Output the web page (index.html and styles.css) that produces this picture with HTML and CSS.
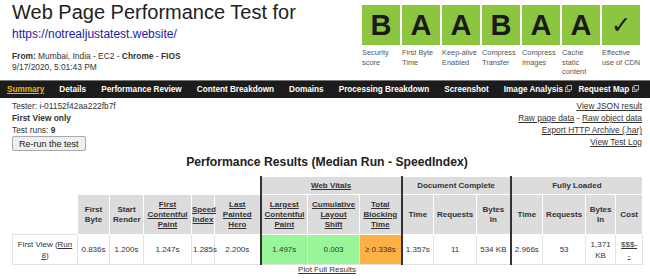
FILE: index.html
```html
<!DOCTYPE html>
<html lang="en">
<head>
    <meta charset="UTF-8">
    <title>WebPageTest - Test Result</title>
    <link rel="stylesheet" href="styles.css">
</head>
<body>

    <div class="header">
        <div class="info">
            <h1 class="title">Web Page Performance Test for</h1>
            <a class="url" href="#">https://notrealjustatest.website/</a>
            <div class="from"><b>From:</b> Mumbai, India - EC2 - <b>Chrome</b> - <b>FIOS</b></div>
            <div class="date">9/17/2020, 5:01:43 PM</div>
        </div>
        <div class="grades">
            <div class="grade">
                <div class="box">B</div>
                <div class="label">Security score</div>
            </div>
            <div class="grade">
                <div class="box">A</div>
                <div class="label">First Byte Time</div>
            </div>
            <div class="grade">
                <div class="box">A</div>
                <div class="label">Keep-alive Enabled</div>
            </div>
            <div class="grade">
                <div class="box">B</div>
                <div class="label">Compress Transfer</div>
            </div>
            <div class="grade">
                <div class="box">A</div>
                <div class="label">Compress Images</div>
            </div>
            <div class="grade">
                <div class="box">A</div>
                <div class="label">Cache static content</div>
            </div>
            <div class="grade">
                <div class="box check">&#10003;</div>
                <div class="label">Effective use of CDN</div>
            </div>
        </div>
    </div>

    <div class="nav">
        <a class="active" href="#">Summary</a>
        <a href="#">Details</a>
        <a href="#">Performance Review</a>
        <a href="#">Content Breakdown</a>
        <a href="#">Domains</a>
        <a href="#">Processing Breakdown</a>
        <a href="#">Screenshot</a>
        <a class="popup" href="#">Image Analysis <svg class="ext" viewBox="0 0 8 8"><rect x="0.5" y="2.5" width="5" height="5" fill="none" stroke="#bbb"/><rect x="2.5" y="0.5" width="5" height="5" fill="#1c1c1c" stroke="#bbb"/></svg></a>
        <a href="#">Request Map <svg class="ext" viewBox="0 0 8 8"><rect x="0.5" y="2.5" width="5" height="5" fill="none" stroke="#bbb"/><rect x="2.5" y="0.5" width="5" height="5" fill="#1c1c1c" stroke="#bbb"/></svg></a>
    </div>

    <div class="main">
        <div class="meta">
            <div class="tester">
                <div>Tester: i-01152f42aa222fb7f</div>
                <div><b>First View only</b></div>
                <div>Test runs: <b>9</b></div>
                <button class="rerun">Re-run the test</button>
            </div>
            <div class="links">
                <div><a href="#">View JSON result</a></div>
                <div><a href="#">Raw page data</a> - <a href="#">Raw object data</a></div>
                <div><a href="#">Export HTTP Archive (.har)</a></div>
                <div><a href="#">View Test Log</a></div>
            </div>
        </div>

        <h2 class="results-title">Performance Results (Median Run - SpeedIndex)</h2>

        <table class="results">
            <colgroup>
                <col style="width:65px">
                <col style="width:32px">
                <col style="width:34px">
                <col style="width:48px">
                <col style="width:23px">
                <col style="width:46px">
                <col style="width:47px">
                <col style="width:52px">
                <col style="width:42px">
                <col style="width:32px">
                <col style="width:43px">
                <col style="width:34px">
                <col style="width:32px">
                <col style="width:43px">
                <col style="width:30px">
                <col style="width:27px">
            </colgroup>
            <tr class="groups">
                <td class="blank" colspan="6"></td>
                <th class="sep" colspan="3"><a href="#">Web Vitals</a></th>
                <th class="sep" colspan="3">Document Complete</th>
                <th class="sep" colspan="4">Fully Loaded</th>
            </tr>
            <tr class="heads">
                <td class="blank"></td>
                <th>First Byte</th>
                <th>Start Render</th>
                <th><a href="#">First Contentful Paint</a></th>
                <th class="tight"><a href="#">Speed Index</a></th>
                <th><a href="#">Last Painted Hero</a></th>
                <th class="sep"><a href="#">Largest Contentful Paint</a></th>
                <th><a href="#">Cumulative Layout Shift</a></th>
                <th><a href="#">Total Blocking Time</a></th>
                <th class="sep">Time</th>
                <th>Requests</th>
                <th>Bytes In</th>
                <th class="sep">Time</th>
                <th>Requests</th>
                <th>Bytes In</th>
                <th>Cost</th>
            </tr>
            <tr class="data">
                <td>First View (<a href="#">Run</a><br><a href="#">8</a>)</td>
                <td>0.836s</td>
                <td>1.200s</td>
                <td>1.247s</td>
                <td>1.285s</td>
                <td>2.200s</td>
                <td class="sep good">1.497s</td>
                <td class="good">0.003</td>
                <td class="warn">&ge; 0.338s</td>
                <td class="sep">1.357s</td>
                <td>11</td>
                <td>534 KB</td>
                <td class="sep">2.966s</td>
                <td>53</td>
                <td>1,371 KB</td>
                <td><a href="#">$$$-<br>-</a></td>
            </tr>
        </table>

        <div class="plot"><a href="#">Plot Full Results</a></div>
    </div>

</body>
</html>
```

FILE: styles.css
```css
*{
    margin: 0px;
    padding: 0px;
    box-sizing: border-box;
}
body{
    font-family: "Liberation Sans", Arial, sans-serif;
    color: #222;
    background-color: white;
}
a{
    color: #333;
}
.header{
    display: flex;
    justify-content: space-between;
    height: 80px;
    padding: 0px 8px 0px 12px;
}
.title{
    font-size: 20px;
    font-weight: normal;
    line-height: 24px;
    color: #222;
}
.url{
    display: block;
    margin-top: 2px;
    font-size: 12px;
    line-height: 16px;
    color: #1a1aa6;
    text-decoration: none;
}
.from{
    margin-top: 9px;
    font-size: 8.4px;
    line-height: 11px;
    color: #333;
}
.date{
    font-size: 8.4px;
    line-height: 11px;
    color: #333;
}
.grades{
    display: flex;
    padding-top: 5px;
}
.grade{
    width: 40px;
}
.box{
    width: 38px;
    height: 40px;
    background-color: #8cc540;
    color: #1a1a1a;
    font-size: 29px;
    font-weight: bold;
    line-height: 40px;
    text-align: center;
}
.box.check{
    font-weight: normal;
    font-size: 24px;
    font-family: "DejaVu Sans", sans-serif;
}
.label{
    width: 40px;
    margin-top: 3px;
    font-size: 7.4px;
    line-height: 9.5px;
    color: #555;
}
.nav{
    display: flex;
    align-items: center;
    height: 18px;
    padding-left: 7px;
    background-color: #1c1c1c;
    border-top: 1px solid #777;
}
.nav a{
    margin-right: 15px;
    color: white;
    font-size: 8.2px;
    font-weight: bold;
    text-decoration: none;
    white-space: nowrap;
}
.nav a.popup{
    margin-right: 6px;
}
.nav a.active{
    color: #f0b800;
    text-decoration: underline;
}
.ext{
    width: 7px;
    height: 7px;
}
.main{
    padding: 0px 8px 0px 12px;
}
.meta{
    display: flex;
    justify-content: space-between;
    padding-top: 2px;
    font-size: 8.4px;
    line-height: 12px;
    color: #333;
}
.links{
    text-align: right;
}
.rerun{
    padding: 0px 6px;
    height: 15px;
    font-family: "Liberation Sans", Arial, sans-serif;
    font-size: 9px;
    color: #222;
    background-color: #efefef;
    border: 1px solid #aaa;
    border-radius: 2px;
}
.results-title{
    margin-top: 4px;
    font-size: 12.2px;
    line-height: 14px;
    text-align: center;
    color: #222;
}
.results{
    margin-top: 7px;
    width: 630px;
    table-layout: fixed;
    border-collapse: collapse;
    font-size: 8px;
    text-align: center;
    color: #333;
}
.results th{
    background-color: #dcdcdc;
    border: 1px solid white;
    font-weight: bold;
    line-height: 10px;
    padding: 0px 3px;
}
.results th.tight{
    padding: 0px;
}
.results th a{
    color: #333;
}
.groups th, .groups td{
    height: 18px;
}
.heads th, .heads td{
    height: 40px;
}
.results .blank{
    background-color: white;
    border: none;
}
.data td{
    height: 30px;
    border: 1px solid #e2e2e2;
    line-height: 11px;
    padding: 0px 1px;
}
.results .sep{
    border-left: 2px solid #333;
}
.data .good{
    background-color: #98f598;
}
.data .warn{
    background-color: #fdb044;
}
.plot{
    text-align: center;
    font-size: 8px;
    line-height: 10px;
    color: #333;
}
```
